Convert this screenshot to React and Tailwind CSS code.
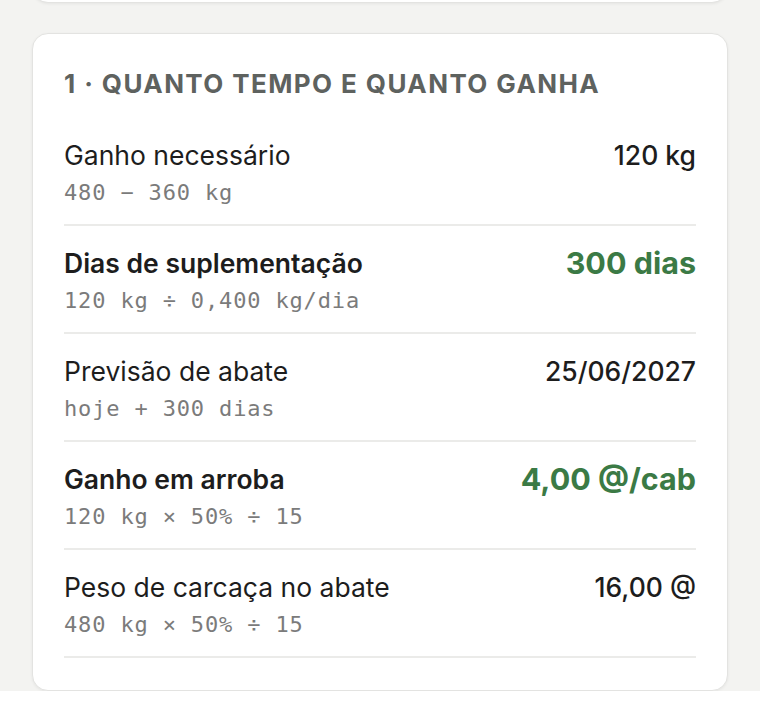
import React from 'react';

// Section 1 rows: label, formula, value
const rows = [
  { label: 'Ganho necessário', formula: '480 − 360 kg', value: '120 kg' },
  { label: 'Dias de suplementação', formula: '120 kg ÷ 0,400 kg/dia', value: '300 dias', highlight: true },
  { label: 'Previsão de abate', formula: 'hoje + 300 dias', value: '25/06/2027' },
  { label: 'Ganho em arroba', formula: '120 kg × 50% ÷ 15', value: '4,00 @/cab', highlight: true },
  { label: 'Peso de carcaça no abate', formula: '480 kg × 50% ÷ 15', value: '16,00 @' },
];

const Row = ({ label, formula, value, highlight }) => (
  <div className="flex items-start justify-between border-b-2 border-[#ebebe9] pt-[21px] pb-[16px]">
    <div className="flex flex-col gap-[7px]">
      <span
        className={`text-[26.5px] leading-[32px] text-[#1d1d1d] ${
          highlight ? 'font-semibold' : 'font-normal'
        }`}
      >
        {label}
      </span>
      <span className="font-['DejaVu_Sans_Mono',monospace] text-[22px] leading-[30px] tracking-[0.85px] text-[#7b7b7b]">
        {formula}
      </span>
    </div>
    {highlight ? (
      <span className="text-[30.5px] leading-[32px] font-bold text-[#3b7a45]">{value}</span>
    ) : (
      <span className="text-[26.5px] leading-[32px] font-medium text-[#1d1d1d]">{value}</span>
    )}
  </div>
);

export default function App() {
  return (
    <div className="min-h-[714px] bg-[#f3f3f1] px-[32px] font-['Inter',sans-serif]">
      {/* bottom edge of the previous card */}
      <div className="-mt-[40px] h-[43px] rounded-2xl border border-[#e3e3e1] bg-white shadow-[0_1px_3px_rgba(0,0,0,0.06)]" />

      <div className="mt-[30px] rounded-2xl border border-[#e3e3e1] bg-white px-[31px] pt-[34px] pb-[32px] shadow-[0_1px_3px_rgba(0,0,0,0.06)]">
        <h2 className="mb-[18px] text-[26px] leading-[32px] font-bold tracking-[1.4px] text-[#5e625f]">
          1 · QUANTO TEMPO E QUANTO GANHA
        </h2>
        {rows.map((row) => (
          <Row key={row.label} {...row} />
        ))}
      </div>
    </div>
  );
}
